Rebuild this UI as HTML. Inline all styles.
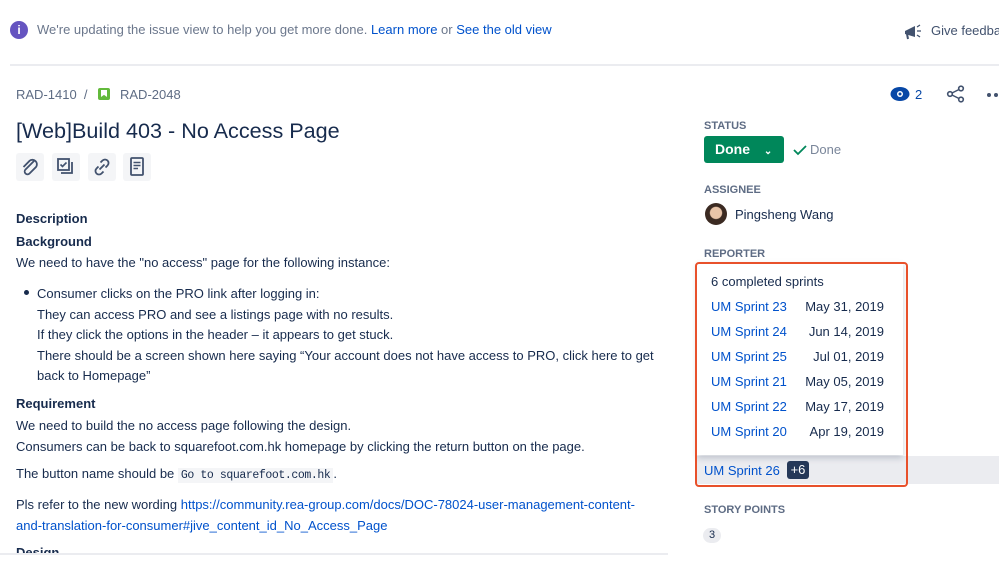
<!DOCTYPE html>
<html><head><meta charset="utf-8"><style>
*{margin:0;padding:0;box-sizing:border-box}
body{width:999px;height:561px;overflow:hidden;background:#fff;font-family:"Liberation Sans",sans-serif;color:#172b4d;position:relative}
.a{position:absolute;white-space:nowrap}
.t{font-size:13px;letter-spacing:0px;color:#172b4d}
.b{font-weight:bold}
.lnk{color:#0052cc}
.lbl{font-size:11px;font-weight:bold;color:#5e6c84}
.ib{position:absolute;top:153px;width:28px;height:28px;background:#f4f5f7;border-radius:3px}
.sp{font-size:13px;color:#0052cc}
.dt{font-size:13px;color:#172b4d;text-align:right;width:100px}
</style></head><body>
<div class="a" style="left:10px;top:21px;width:18px;height:18px;border-radius:50%;background:#6554c0;color:#fff;font-size:12px;font-weight:bold;text-align:center;line-height:18px">i</div>
<div class="a" style="left:37px;top:22px;font-size:13px;color:#6b778c">We're updating the issue view to help you get more done. <span class="lnk">Learn more</span> or <span class="lnk">See the old view</span></div>
<svg class="a" style="left:903px;top:23px" width="20" height="18" viewBox="0 0 20 18"><path d="M2 8 L12 3 L12 14 L2 11Z" fill="#42526e"/><path d="M4 11 L5 16" stroke="#42526e" stroke-width="2"/><path d="M14 4 L17 2 M14 8 H18 M14 12 L17 14" stroke="#42526e" stroke-width="1.3"/></svg>
<div class="a" style="left:931px;top:23px;font-size:13px;color:#42526e">Give feedback</div>
<div class="a" style="left:10px;top:64px;width:989px;height:2px;background:#ebecf0"></div>

<div class="a" style="left:16px;top:87px;font-size:13px;color:#5e6c84">RAD-1410 &nbsp;/</div>
<div class="a" style="left:98px;top:88px;width:12px;height:12px;background:#63ba3c;border-radius:2px"><div style="margin:2px 3px;width:6px;height:7px;background:#fff;clip-path:polygon(0 0,100% 0,100% 100%,50% 70%,0 100%)"></div></div>
<div class="a" style="left:120px;top:87px;font-size:13px;color:#5e6c84">RAD-2048</div>
<div class="a" style="left:16px;top:118px;font-size:21.6px;color:#172b4d">[Web]Build 403 - No Access Page</div>
<div class="ib" style="left:16px"><svg width="28" height="28"><path d="M18 8 L9.5 16.5 a2.8 2.8 0 0 0 4 4 L20 14 a4.5 4.5 0 0 0 -6.3 -6.3 L7.5 14" fill="none" stroke="#42526e" stroke-width="1.8"/></svg></div>
<div class="ib" style="left:52px"><svg width="28" height="28"><rect x="6" y="6" width="11" height="11" fill="none" stroke="#42526e" stroke-width="1.8"/><path d="M8.5 11.5 l2 2 l4 -4" fill="none" stroke="#42526e" stroke-width="1.6"/><path d="M20 9 V20 H9" fill="none" stroke="#42526e" stroke-width="1.8"/></svg></div>
<div class="ib" style="left:88px"><svg width="28" height="28"><path d="M11.5 16.5 L16.5 11.5 M12.5 9.5 l2-2 a3.5 3.5 0 0 1 5 5 l-2 2 M15.5 18.5 l-2 2 a3.5 3.5 0 0 1 -5 -5 l2 -2" fill="none" stroke="#42526e" stroke-width="1.8"/></svg></div>
<div class="ib" style="left:123px"><svg width="28" height="28"><rect x="8" y="5" width="12" height="17" rx="1" fill="none" stroke="#42526e" stroke-width="1.8"/><path d="M10.5 9.5 H17.5 M10.5 12.5 H17.5 M10.5 15.5 H15" stroke="#42526e" stroke-width="1.4"/></svg></div>

<div class="a t b" style="left:16px;top:211px">Description</div>
<div class="a t b" style="left:16px;top:234px">Background</div>
<div class="a t" style="left:16px;top:255px">We need to have the "no access" page for the following instance:</div>
<div class="a" style="left:24px;top:290px;width:5px;height:5px;border-radius:50%;background:#172b4d"></div>
<div class="a t" style="left:37px;top:284px;line-height:20.6px">Consumer clicks on the PRO link after logging in:<br>They can access PRO and see a listings page with no results.<br>If they click the options in the header – it appears to get stuck.<br>There should be a screen shown here saying “Your account does not have access to PRO, click here to get<br>back to Homepage”</div>
<div class="a t b" style="left:16px;top:396px">Requirement</div>
<div class="a t" style="left:16px;top:416px;line-height:20.5px">We need to build the no access page following the design.<br>Consumers can be back to squarefoot.com.hk homepage by clicking the return button on the page.</div>
<div class="a t" style="left:16px;top:466px">The button name should be <span style="font-family:'Liberation Mono',monospace;font-size:11.5px;background:#f4f5f7;padding:1px 3px;letter-spacing:-0.4px">Go to squarefoot.com.hk</span>.</div>
<div class="a t" style="left:16px;top:495px;line-height:20.5px">Pls refer to the new wording <span class="lnk">https://community.rea-group.com/docs/DOC-78024-user-management-content-<br>and-translation-for-consumer#jive_content_id_No_Access_Page</span></div>
<div class="a t b" style="left:16px;top:545px">Design</div>
<div class="a" style="left:0;top:553px;width:668px;height:8px;background:#fff;border-top:2px solid #ebecf0"></div>

<svg class="a" style="left:890px;top:86px" width="20" height="16"><ellipse cx="10" cy="8" rx="9.5" ry="7" fill="#0747a6"/><circle cx="10" cy="8" r="3" fill="#fff"/><circle cx="10" cy="8" r="1.5" fill="#0747a6"/></svg>
<div class="a" style="left:915px;top:87px;font-size:13px;color:#0747a6">2</div>
<svg class="a" style="left:946px;top:85px" width="20" height="18"><circle cx="15" cy="3.5" r="2.3" fill="none" stroke="#42526e" stroke-width="1.6"/><circle cx="4" cy="9" r="2.3" fill="none" stroke="#42526e" stroke-width="1.6"/><circle cx="15" cy="14.5" r="2.3" fill="none" stroke="#42526e" stroke-width="1.6"/><path d="M6 8 L13 4.5 M6 10 L13 13.5" stroke="#42526e" stroke-width="1.5"/></svg>
<div class="a" style="left:987px;top:93px;width:4px;height:4px;border-radius:50%;background:#42526e"></div>
<div class="a" style="left:994px;top:93px;width:4px;height:4px;border-radius:50%;background:#42526e"></div>

<div class="a lbl" style="left:704px;top:120px">STATUS</div>
<div class="a" style="left:704px;top:136px;width:80px;height:27px;background:#00875a;border-radius:3px;color:#fff;font-size:14px;font-weight:bold;line-height:27px;padding-left:11px">Done <span style="font-size:10px;margin-left:10px">&#8964;</span></div>
<svg class="a" style="left:793px;top:144px" width="14" height="12"><path d="M1 6 L5 10 L13 2" fill="none" stroke="#00875a" stroke-width="1.8"/></svg>
<div class="a" style="left:810px;top:142px;font-size:13px;color:#7a869a">Done</div>
<div class="a lbl" style="left:704px;top:184px">ASSIGNEE</div>
<div class="a" style="left:705px;top:203px;width:22px;height:22px;border-radius:50%;background:radial-gradient(circle at 50% 45%,#e8c4a8 0 35%,#3b2a22 40%)"></div>
<div class="a" style="left:735px;top:207px;font-size:13px">Pingsheng Wang</div>
<div class="a lbl" style="left:704px;top:248px">REPORTER</div>

<div class="a" style="left:697px;top:456px;width:302px;height:28px;background:#ebecf0"></div>
<div class="a" style="left:697px;top:262px;width:206px;height:193px;background:#fff;box-shadow:0 3px 6px rgba(9,30,66,.2)"></div>
<div class="a" style="left:711px;top:274px;font-size:13px;color:#172b4d">6 completed sprints</div>
<div class="a sp" style="left:711px;top:299px">UM Sprint 23</div><div class="a dt" style="left:784px;top:299px">May 31, 2019</div>
<div class="a sp" style="left:711px;top:324px">UM Sprint 24</div><div class="a dt" style="left:784px;top:324px">Jun 14, 2019</div>
<div class="a sp" style="left:711px;top:349px">UM Sprint 25</div><div class="a dt" style="left:784px;top:349px">Jul 01, 2019</div>
<div class="a sp" style="left:711px;top:374px">UM Sprint 21</div><div class="a dt" style="left:784px;top:374px">May 05, 2019</div>
<div class="a sp" style="left:711px;top:399px">UM Sprint 22</div><div class="a dt" style="left:784px;top:399px">May 17, 2019</div>
<div class="a sp" style="left:711px;top:424px">UM Sprint 20</div><div class="a dt" style="left:784px;top:424px">Apr 19, 2019</div>
<div class="a sp" style="left:704px;top:463px">UM Sprint 26</div>
<div class="a" style="left:787px;top:461px;width:22px;height:18px;background:#253858;color:#fff;font-size:13px;border-radius:3px;text-align:center;line-height:18px">+6</div>
<div class="a" style="left:695px;top:262px;width:213px;height:225px;border:2px solid #e8512b;border-radius:4px"></div>

<div class="a lbl" style="left:704px;top:504px">STORY POINTS</div>
<div class="a" style="left:703px;top:528px;width:18px;height:15px;background:#ebecf0;border-radius:8px;font-size:11px;text-align:center;line-height:15px;color:#172b4d">3</div>
</body></html>
